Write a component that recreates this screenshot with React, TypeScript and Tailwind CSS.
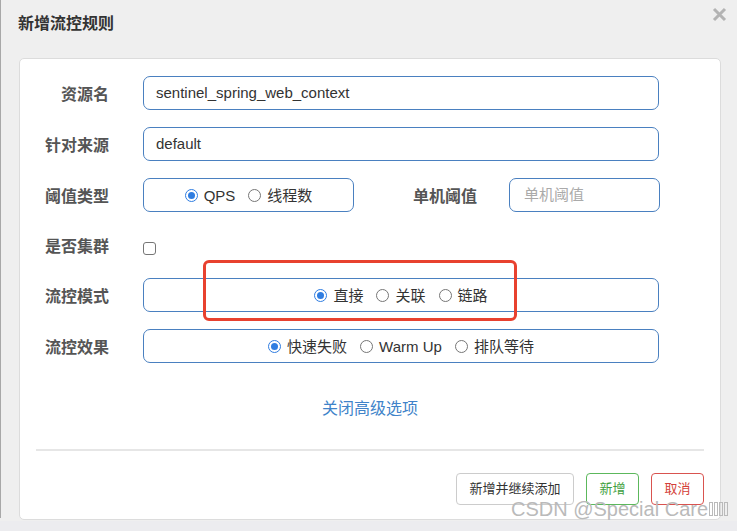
import React from "react";

const FONT = '"Liberation Sans", "Noto Sans CJK SC", Arial, sans-serif';

function Radio({ checked, label }: { checked?: boolean; label: string }) {
  return (
    <span className="flex items-center gap-[6px]">
      {checked ? (
        <span className="w-[13px] h-[13px] rounded-full border-[1.5px] border-[#2f7de1] bg-white flex items-center justify-center">
          <span className="w-[7px] h-[7px] rounded-full bg-[#2f7de1]" />
        </span>
      ) : (
        <span className="w-[13px] h-[13px] rounded-full border border-[#767676] bg-white" />
      )}
      <span className="text-[15px] text-[#333] leading-none">{label}</span>
    </span>
  );
}

function Label({ children }: { children: React.ReactNode }) {
  return (
    <div className="w-[89px] text-right text-[16px] font-bold text-[#555] leading-none pt-[4px]">
      {children}
    </div>
  );
}

export default function App() {
  return (
    <div
      className="relative w-[737px] h-[531px] bg-[#efefef] overflow-hidden"
      style={{ fontFamily: FONT }}
    >
      <div className="absolute left-0 top-0 w-px h-[518px] bg-[#a8a8a8]" />

      <div className="flex items-start justify-between pl-[18px] pr-[10px] pt-[14px] h-[58px]">
        <div className="text-[16px] font-bold text-[#333] leading-[20px]">新增流控规则</div>
        <svg width="15" height="15" viewBox="0 0 15 15" className="mt-[-7px]">
          <path d="M2 2 L13 13 M13 2 L2 13" stroke="#b3b3b3" strokeWidth="3" />
        </svg>
      </div>

      <div className="ml-[19px] w-[702px] h-[462px] bg-white border border-[#dcdcdc] rounded-[5px] pt-[17px] flex flex-col">
        <div className="flex flex-col gap-[17px]">
          <div className="flex items-center h-[34px]">
            <Label>资源名</Label>
            <div className="ml-[34px] w-[516px] h-[34px] border border-[#4a80c0] rounded-[7px] flex items-center pl-[12px] text-[15px] text-[#333]">
              sentinel_spring_web_context
            </div>
          </div>
          <div className="flex items-center h-[34px]">
            <Label>针对来源</Label>
            <div className="ml-[34px] w-[516px] h-[34px] border border-[#4a80c0] rounded-[7px] flex items-center pl-[12px] text-[15px] text-[#333]">
              default
            </div>
          </div>
          <div className="flex items-center h-[34px]">
            <Label>阈值类型</Label>
            <div className="ml-[34px] w-[211px] h-[34px] border border-[#4a80c0] rounded-[7px] flex items-center justify-center gap-[13px]">
              <Radio checked label="QPS" />
              <Radio label="线程数" />
            </div>
            <div className="ml-[56px] w-[67px] text-right text-[16px] font-bold text-[#555] leading-none pt-[4px]">
              单机阈值
            </div>
            <div className="ml-[32px] w-[151px] h-[34px] border border-[#4a80c0] rounded-[7px] flex items-center pl-[14px] text-[15px] text-[#aaa]">
              单机阈值
            </div>
          </div>
          <div className="flex items-center h-[32px]">
            <Label>是否集群</Label>
            <div className="ml-[34px] w-[13px] h-[13px] border border-[#767676] rounded-[3px] bg-white mt-[7px]" />
          </div>
          <div className="flex items-center h-[34px]">
            <Label>流控模式</Label>
            <div className="ml-[34px] w-[516px] h-[34px] border border-[#4a80c0] rounded-[7px] flex items-center justify-center gap-[13px]">
              <Radio checked label="直接" />
              <Radio label="关联" />
              <Radio label="链路" />
            </div>
          </div>
          <div className="flex items-center h-[34px]">
            <Label>流控效果</Label>
            <div className="ml-[34px] w-[516px] h-[34px] border border-[#4a80c0] rounded-[7px] flex items-center justify-center gap-[13px]">
              <Radio checked label="快速失败" />
              <Radio label="Warm Up" />
              <Radio label="排队等待" />
            </div>
          </div>
        </div>

        <div className="mt-[34px] h-[24px] text-center text-[16px] leading-[24px] text-[#4083c9]">
          关闭高级选项
        </div>

        <div className="mt-[28px] mx-[16px] h-[1.5px] bg-[#e6e6e6]" />

        <div className="mt-[22px] flex justify-end gap-[12px] pr-[16px]">
          <div className="w-[118px] h-[32px] border border-[#cccccc] rounded-[4px] flex items-center justify-center text-[13px] text-[#333]">
            新增并继续添加
          </div>
          <div className="w-[53px] h-[32px] border border-[#5cb85c] rounded-[4px] flex items-center justify-center text-[13px] text-[#3f9f3f]">
            新增
          </div>
          <div className="w-[53px] h-[32px] border border-[#d9534f] rounded-[4px] flex items-center justify-center text-[13px] text-[#d43f3a]">
            取消
          </div>
        </div>
      </div>

      <div className="absolute left-0 top-[521px] w-[737px] h-[10px] bg-[#ececef]" />

      <div className="absolute left-[203px] top-[260px] w-[314px] h-[61px] border-[3px] border-[#e8412f] rounded-[6px]" />

      <div className="absolute left-[511px] top-[497px] flex items-center text-[20px] leading-[24px] text-[#bababa] whitespace-nowrap">
        <span>CSDN @Special Care</span>
        <span className="ml-[1px] flex gap-[1px] items-center">
          <span className="w-[4px] h-[14px] border border-[#bababa]" />
          <span className="w-[4px] h-[14px] border border-[#bababa]" />
          <span className="w-[4px] h-[14px] border border-[#bababa]" />
          <span className="w-[4px] h-[14px] border border-[#bababa]" />
        </span>
      </div>
    </div>
  );
}
